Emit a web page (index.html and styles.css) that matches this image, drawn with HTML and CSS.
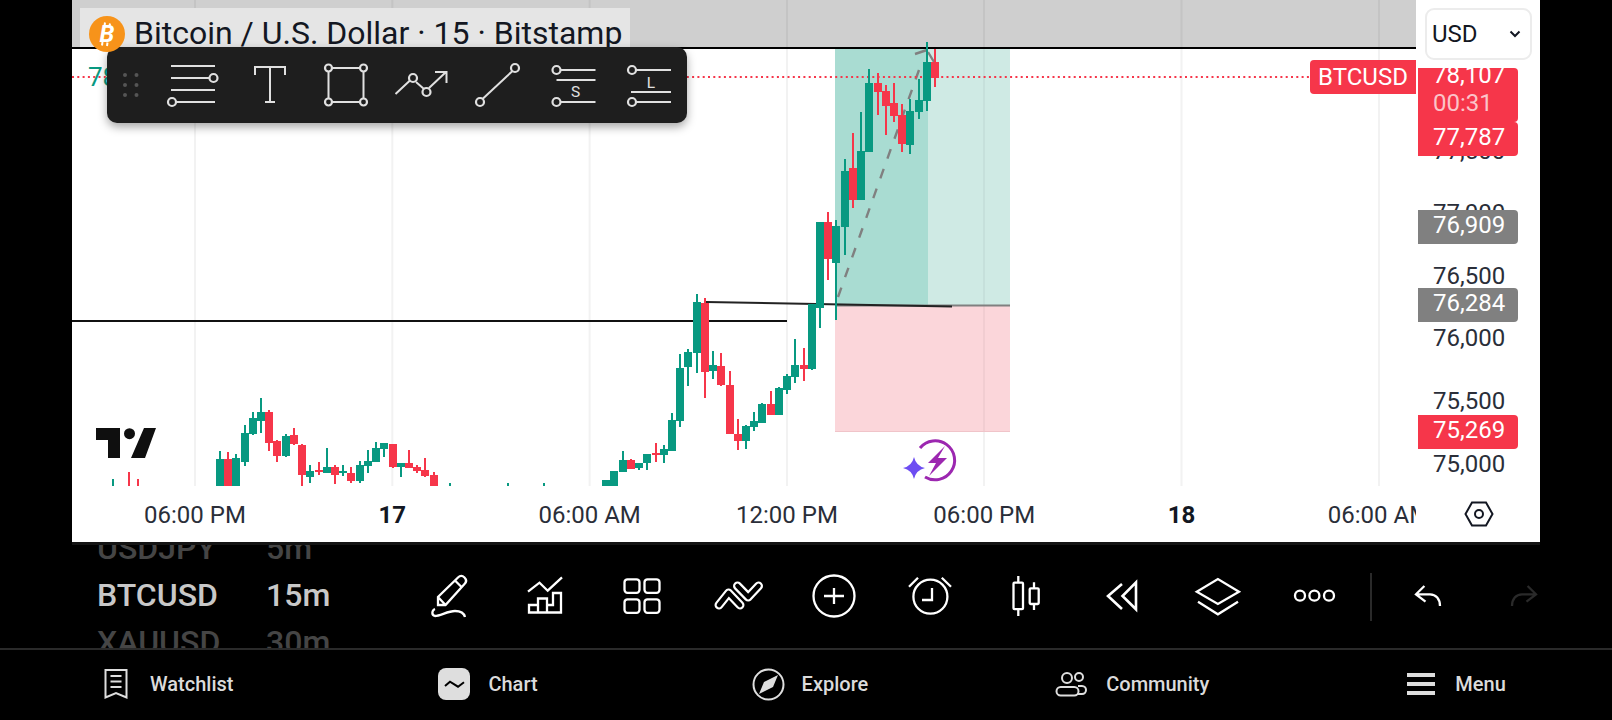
FILE: index.html
```html
<!DOCTYPE html>
<html lang="en">
<head>
<meta charset="utf-8">
<title>BTCUSD chart</title>
<link rel="stylesheet" href="styles.css">
</head>
<body>
<div class="app">
  <section class="frame">
    <div class="main">
      <div class="plot">
        <svg class="canvas" width="1344" height="486" viewBox="72 0 1344 486">
          <g class="grid">
            <path d="M195 0V486M392.3 0V486M589.6 0V486M787 0V486M984 0V486M1181.5 0V486M1379 0V486"/>
          </g>
          <rect x="835" y="48" width="93" height="257" fill="#a9dcd2"/>
          <rect x="928" y="48" width="82" height="257" fill="#cfeae4"/>
          <rect x="835" y="306" width="175" height="126" fill="#fbd6da"/>
          <path d="M984 48V432" stroke="#000" stroke-opacity=".04" stroke-width="2"/>
          <path d="M835 305.5H1010" stroke="#808080" stroke-width="2"/>
          <path d="M835 431.5H1010" stroke="#f0c4c9" stroke-width="1"/>
          <rect x="72" y="0" width="1344" height="47" fill="#000" fill-opacity=".19"/>
          <rect x="72" y="47" width="1344" height="2" fill="#000"/>
          <path d="M72 321H787" stroke="#111" stroke-width="2"/>
          <path d="M706 302L952 306.5" stroke="#222" stroke-width="2"/>
          <path d="M838 297L919 70" stroke="#808080" stroke-width="2.4" stroke-dasharray="10 11" fill="none"/>
          <path d="M915 54L927 50M928 52L934 62" stroke="#808080" stroke-width="2.4" fill="none"/>
          <path d="M72 77H1310" stroke="#f6364a" stroke-width="2" stroke-dasharray="2 3.3"/>
          <path class="up" d="M112 479h2V486h-2zM216 459h8V486h-8zM219 451h2V486h-2zM232 458h8V486h-8zM235 454h2V486h-2zM241 433h8V462h-8zM244 425h2V466h-2zM249 418h8V434h-8zM252 412h2V435h-2zM257 412h8V421h-8zM260 398h2V433h-2zM282 436h8V456h-8zM285 434h2V457h-2zM306 471h8V477h-8zM309 465h2V483h-2zM323 467h8V473h-8zM326 448h2V473h-2zM339 471h8V473h-8zM342 465h2V476h-2zM356 465h8V481h-8zM359 461h2V483h-2zM364 461h8V466h-8zM367 450h2V473h-2zM372 448h8V462h-8zM375 442h2V462h-2zM380 443h8V449h-8zM383 443h2V457h-2zM397 463h8V467h-8zM400 463h2V477h-2zM449 483h2V486h-2zM507 483h2V486h-2zM543 483h2V486h-2zM602 480h8V486h-8zM610 471h8V486h-8zM619 460h8V472h-8zM622 451h2V472h-2zM635 463h8V468h-8zM638 463h2V470h-2zM643 454h8V463h-8zM646 454h2V470h-2zM660 449h8V455h-8zM663 445h2V463h-2zM668 420h8V451h-8zM671 413h2V451h-2zM676 368h8V421h-8zM679 354h2V427h-2zM684 352h8V367h-8zM687 349h2V386h-2zM693 302h8V353h-8zM696 294h2V373h-2zM709 365h8V371h-8zM712 351h2V379h-2zM742 426h8V441h-8zM745 425h2V449h-2zM750 421h8V427h-8zM753 412h2V431h-2zM758 404h8V423h-8zM761 403h2V423h-2zM775 388h8V415h-8zM778 387h2V415h-2zM783 376h8V390h-8zM786 374h2V394h-2zM791 365h8V377h-8zM794 339h2V383h-2zM808 304h8V369h-8zM811 304h2V370h-2zM816 222h8V308h-8zM819 222h2V328h-2zM832 226h8V263h-8zM835 220h2V320h-2zM841 171h8V227h-8zM844 159h2V255h-2zM857 151h8V200h-8zM860 112h2V200h-2zM865 83h8V152h-8zM868 69h2V152h-2zM906 111h8V145h-8zM909 99h2V154h-2zM915 100h8V112h-8zM918 79h2V119h-2zM923 62h8V101h-8zM926 42h2V111h-2z"/>
          <path class="down" d="M128 472h2V486h-2zM137 479h2V486h-2zM224 459h8V486h-8zM227 452h2V486h-2zM265 412h8V443h-8zM268 410h2V451h-2zM273 441h8V456h-8zM276 440h2V462h-2zM290 435h8V444h-8zM293 428h2V445h-2zM298 445h8V475h-8zM301 444h2V486h-2zM315 470h8V472h-8zM318 462h2V475h-2zM331 467h8V475h-8zM334 465h2V484h-2zM347 473h8V481h-8zM350 467h2V483h-2zM389 444h8V467h-8zM392 444h2V468h-2zM405 463h8V468h-8zM408 450h2V468h-2zM413 467h8V471h-8zM416 465h2V473h-2zM421 470h8V476h-8zM424 458h2V477h-2zM430 475h8V486h-8zM433 472h2V486h-2zM627 460h8V469h-8zM630 459h2V469h-2zM652 453h8V455h-8zM655 443h2V462h-2zM701 303h8V372h-8zM704 298h2V398h-2zM717 366h8V385h-8zM720 353h2V386h-2zM726 385h8V434h-8zM729 371h2V434h-2zM734 434h8V441h-8zM737 419h2V450h-2zM767 404h8V415h-8zM770 391h2V415h-2zM800 365h8V369h-8zM803 348h2V381h-2zM824 222h8V259h-8zM827 212h2V280h-2zM849 168h8V200h-8zM852 133h2V208h-2zM874 83h8V92h-8zM877 73h2V115h-2zM882 91h8V106h-8zM885 85h2V135h-2zM890 103h8V116h-8zM893 83h2V122h-2zM898 115h8V144h-8zM901 104h2V152h-2zM931 62h8V78h-8zM934 49h2V87h-2z"/>
          <path class="logo" d="M96 428H120V458H108V440H96zM144 428H156L145 458H131z"/>
          <circle class="logo" cx="129.5" cy="433.7" r="5.5"/>
          <path d="M920 448A19.500 19.500 0 1 1 925 477" fill="none" stroke="#9c27b0" stroke-width="3"/>
          <path d="M945 446L928 463H936L929 476L947 458H938z" fill="#9c27b0"/>
          <path d="M914 457Q916 466 925 468Q916 470 914 479Q912 470 903 468Q912 466 914 457z" fill="#6d4df2"/>
        </svg>

        <div class="title">
          <svg class="coin" width="36" height="36" viewBox="0 0 36 36">
            <circle cx="18" cy="18" r="18" fill="#f7931a"/>
            <path d="M16 6.500L15.500 10M21 7.500L20.500 10M13.500 26L13 29.500M18.500 26.500L18 30" stroke="#fff" stroke-width="2"/>
            <text x="18" y="26" class="coin-b">B</text>
          </svg>
          <span>Bitcoin / U.S. Dollar · 15 · Bitstamp</span>
        </div>
        <div class="last-price">78,107</div>
        <div class="symbol-tag">BTCUSD</div>

        <div class="drawbar">
          <svg class="grip" width="48" height="76" viewBox="0 0 48 76">
            <g fill="#555"><circle cx="18" cy="28" r="2"/><circle cx="29.500" cy="28" r="2"/><circle cx="18" cy="38" r="2"/><circle cx="29.500" cy="38" r="2"/><circle cx="18" cy="48" r="2"/><circle cx="29.500" cy="48" r="2"/></g>
          </svg>
          <svg class="dt" viewBox="0 0 76.500 76"><path d="M16 19H60M16 31H54M16 43H60M21 55H60"/><circle cx="58.500" cy="31" r="4"/><circle cx="17" cy="55" r="4"/></svg>
          <svg class="dt" viewBox="0 0 76.500 76"><path d="M23 28V20H53V28M38 20V55M33 55H43"/></svg>
          <svg class="dt" viewBox="0 0 76.500 76"><path d="M21 21H56M21 55H56M20.500 25V51M55.500 25V51"/><circle cx="20.500" cy="21" r="3.500"/><circle cx="55.500" cy="21" r="3.500"/><circle cx="20.500" cy="55" r="3.500"/><circle cx="55.500" cy="55" r="3.500"/></svg>
          <svg class="dt" viewBox="2 0 76.500 76"><path d="M12.500 47L27.500 33M33 35L41 42M46 41L63 25M52 25H63.500V36"/><circle cx="30" cy="31" r="4"/><circle cx="43.500" cy="45" r="4"/></svg>
          <svg class="dt" viewBox="1.500 0 76.500 76"><path d="M23 52L53 24"/><circle cx="20.500" cy="55" r="4"/><circle cx="55.500" cy="21" r="4"/></svg>
          <svg class="dt" viewBox="0.500 0 76.500 76"><path d="M23 23H58M19 33H58M23 55H58"/><circle cx="19" cy="23" r="4"/><circle cx="19" cy="55" r="4"/><text x="38" y="50" class="dt-t">S</text></svg>
          <svg class="dt" viewBox="1 0 76.500 76"><path d="M23 23H58M18 45H58M23 55H58"/><circle cx="19" cy="23" r="4"/><circle cx="19" cy="55" r="4"/><text x="38" y="40.500" class="dt-t">L</text></svg>
        </div>
      </div>
      <div class="timeaxis">
        <span>06:00 PM</span><span class="day">17</span><span>06:00 AM</span><span>12:00 PM</span><span>06:00 PM</span><span class="day">18</span><span>06:00 AM</span>
      </div>
    </div>

    <aside class="side">
      <div class="usd"><span>USD</span>
        <svg width="12" height="8" viewBox="0 0 12 8"><path d="M1.500 1.500L6 6L10.500 1.500" fill="none" stroke="#131722" stroke-width="2"/></svg>
      </div>
      <span class="tick t-775">77,500</span>
      <span class="tick t-770">77,000</span>
      <span class="tick t-765">76,500</span>
      <span class="tick t-760">76,000</span>
      <span class="tick t-755">75,500</span>
      <span class="tick t-750">75,000</span>
      <div class="plabel red now"><span class="clip-top">78,107</span><span class="cd">00:31</span></div>
      <div class="plabel red l-787">77,787</div>
      <div class="plabel grey l-909">76,909</div>
      <div class="plabel grey l-284">76,284</div>
      <div class="plabel red l-269">75,269</div>
      <div class="axis-gear">
        <svg width="30" height="26" viewBox="0 0 30 26"><path d="M8 1.500H22L28.500 13L22 24.500H8L1.500 13z" fill="none" stroke="#131722" stroke-width="2"/><circle cx="15" cy="13" r="4" fill="none" stroke="#131722" stroke-width="2"/></svg>
      </div>
    </aside>
  </section>

  <section class="tools">
    <div class="watch">
      <div class="wrow dim"><b>USDJPY</b><span>5m</span></div>
      <div class="wrow"><b>BTCUSD</b><span>15m</span></div>
      <div class="wrow dim"><b>XAUUSD</b><span>30m</span></div>
    </div>
    <svg class="tb" viewBox="0 0 96 64"><path d="M36 41V33L56 13.500C58 11.500 60.500 11.500 62.500 13.500S64.500 18 62.500 20L43.500 41zM36 33L43.500 41M53 16.500L59.500 23"/><path d="M33 45C30 46 29 51 33 52C38 52 46 47 53 47C58 47 62 49 63 53"/></svg>
    <svg class="tb" viewBox="0 0 96 64"><path d="M30 27.700L41.500 18.700L49.700 26.700L64 13.300"/><path d="M31 41H40V34.500H49V41H55V29H63V48.500H31zM40 41V48.500M49 41V48.500"/></svg>
    <svg class="tb" viewBox="0 0 96 64"><rect x="30.500" y="15.300" width="15" height="13.500" rx="3"/><rect x="50.500" y="15.300" width="15" height="13.500" rx="3"/><rect x="30.500" y="35.300" width="15" height="13.500" rx="3"/><rect x="50.500" y="35.300" width="15" height="13.500" rx="3"/></svg>
    <svg class="tb" viewBox="0 0 96 64"><path class="fat" d="M29 41L38.600 29L50 41"/><path class="thin" d="M29 41L38.600 29L50 41"/><path class="fat" d="M47.500 22L58.200 33L68.500 22"/><path class="thin" d="M47.500 22L58.200 33L68.500 22"/></svg>
    <svg class="tb" viewBox="0 0 96 64"><circle cx="48" cy="32" r="20.500"/><path d="M38 32H58M48 24V40"/></svg>
    <svg class="tb" viewBox="0 0 96 64"><circle cx="48.400" cy="32.700" r="17"/><path d="M50 24V36H40M27 22.700L36 13.700M59.800 13.700L69 22.700"/></svg>
    <svg class="tb" viewBox="0 0 96 64"><rect x="35.500" y="18.700" width="9.500" height="26.500" rx="1"/><path d="M40.300 12V18.700M40.300 45.300V52M56 18.300V24.300M56 40V46"/><rect x="51.700" y="24.300" width="9" height="15.700" rx="1"/></svg>
    <svg class="tb strong" viewBox="0 0 96 64"><path d="M48 20L34 32L48 45"/><path d="M62 18.300V45.300L48.500 32z"/></svg>
    <svg class="tb" viewBox="0 0 96 64"><path d="M26.800 27.700L47.900 15L69 27.700L47.900 40z"/><path d="M28 37.700L47.900 50.300L68 37.700"/></svg>
    <svg class="tb" viewBox="0 0 96 64"><circle cx="34" cy="31.700" r="5"/><circle cx="48.400" cy="31.700" r="5"/><circle cx="63" cy="31.700" r="5"/></svg>
    <i class="vr"></i>
    <svg class="tb" viewBox="0 0 96 64"><path d="M44.400 22L36 30.300L45.500 37.700M36 30.300H50C56 30.300 60 35 60 42"/></svg>
    <svg class="tb off" viewBox="0 0 96 64"><path d="M51.600 22L60 30.300L50.500 37.700M60 30.300H46C40 30.300 36 35 36 42"/></svg>
  </section>

  <nav class="nav">
    <a class="item">
      <svg width="24" height="30" viewBox="0 0 24 30"><path class="ns" d="M1.500 1H22.500V28.500L12 24L1.500 28.500zM6.500 7H17.500M6.500 12.500H17.500M6.500 18H17.500"/></svg>
      <span>Watchlist</span>
    </a>
    <a class="item i-chart">
      <span class="chip"><svg width="32" height="32" viewBox="0 0 32 32"><path d="M7 18L12 13.700L20 18.700L26 14.300" fill="none" stroke="#000" stroke-width="2"/></svg></span>
      <span>Chart</span>
    </a>
    <a class="item i-explore">
      <svg width="33" height="33" viewBox="0 0 33 33"><circle class="ns" cx="16.500" cy="16.500" r="15"/><path d="M26 7L12 14L7 26L21 19z" fill="#dedede"/></svg>
      <span>Explore</span>
    </a>
    <a class="item i-community">
      <svg width="32" height="26" viewBox="0 0 32 26"><circle class="ns" cx="12" cy="7" r="5"/><circle class="ns" cx="24" cy="6" r="4"/><rect class="ns" x="1.500" y="16" width="22" height="8.500" rx="4.200"/><path class="ns" d="M23 15H27C29.500 15 31 17 31 19S29.500 23 27 23H22"/></svg>
      <span>Community</span>
    </a>
    <a class="item i-menu">
      <svg width="28" height="24" viewBox="0 0 28 24"><path d="M0 1H28V5H0zM0 10H28V14H0zM0 19H28V23H0z" fill="#dedede"/></svg>
      <span>Menu</span>
    </a>
  </nav>
</div>
</body>
</html>
```
FILE: styles.css
```css
* { box-sizing: border-box; }
html, body { margin: 0; padding: 0; width: 1612px; height: 720px; overflow: hidden; background: #000; }
body { font-family: Roboto, "Liberation Sans", sans-serif; }
.app { width: 1612px; height: 720px; overflow: hidden; display: flex; flex-direction: column; background: #000; }

.frame { display: flex; margin-left: 72px; width: 1468px; height: 545px; flex: none; background: #fff; border-bottom: 3px solid #141414; }
.main { width: 1344px; flex: none; display: flex; flex-direction: column; }
.plot { position: relative; height: 486px; flex: none; }
.canvas { display: block; overflow: visible; }
.grid path { stroke: #f2f2f2; stroke-width: 2; fill: none; }
.up { fill: #089981; }
.down { fill: #f6364a; }
.logo { fill: #0f0f0f; }

.title { position: absolute; left: 8px; top: 8px; width: 550px; height: 39px; display: flex; align-items: center; background: #e5e5e5; color: #131722; font-size: 32px; white-space: nowrap; line-height: 39px; }
.title span { margin-left: 9px; position: relative; top: 6px; }
.coin { flex: none; margin-left: 9px; position: relative; top: 6px; z-index: 1; }
.coin-b { font: italic 700 24px Roboto, sans-serif; fill: #fff; text-anchor: middle; }

.last-price { position: absolute; left: 16px; top: 62px; font-size: 26px; line-height: 30px; color: #089981; }
.symbol-tag { position: absolute; right: 0; top: 60px; width: 106px; height: 34px; border-radius: 4px 0 0 4px; background: #f6364a; color: #fff; font-size: 24px; line-height: 34px; text-align: center; }

.drawbar { position: absolute; left: 35px; top: 47px; width: 580px; height: 76px; display: flex; background: #1e1e1e; border-radius: 10px; box-shadow: 0 4px 10px rgba(0,0,0,.35); }
.grip { flex: none; }
.dt { flex: none; width: 76.5px; height: 76px; fill: none; stroke: #e0e0e0; stroke-width: 2; }
.dt circle { stroke-width: 2.2; fill: #1e1e1e; }
.dt-t { font: 400 15.5px Roboto, sans-serif; fill: #e0e0e0; stroke: none; text-anchor: middle; }

.timeaxis { height: 56px; flex: none; overflow: hidden; display: grid; grid-template-columns: repeat(7, 197.33px); padding-left: 24.3px; font-size: 24px; line-height: 58px; color: #2a2e39; text-align: center; white-space: nowrap; }
.day { font-weight: 700; color: #131722; }

.side { position: relative; width: 124px; flex: none; display: flex; flex-direction: column; }
.usd { margin: 8px 8px 0 9px; height: 52px; flex: none; border: 2px solid #ececec; border-radius: 9px; display: flex; align-items: center; justify-content: space-between; padding: 0 9px 0 5px; font-size: 24px; color: #131722; background: #fff; }
.tick { position: absolute; left: 2px; width: 100px; padding-left: 15px; font-size: 24px; line-height: 28px; color: #2a2e39; }
.t-775 { top: 137px; } .t-770 { top: 199px; } .t-765 { top: 262px; } .t-760 { top: 324px; } .t-755 { top: 387px; } .t-750 { top: 450px; }
.plabel { position: absolute; left: 2px; width: 100px; height: 34px; border-radius: 0 4px 4px 0; color: #fff; font-size: 24px; line-height: 28px; padding: 1px 0 0 15px; overflow: hidden; }
.red { background: #f6364a; }
.grey { background: #808080; }
.now { top: 68px; height: 54px; padding-top: 0; }
.clip-top, .cd { display: block; }
.clip-top { margin-top: -7px; }
.cd { color: #fbc4c9; }
.l-787 { top: 122px; } .l-909 { top: 210px; } .l-284 { top: 288px; } .l-269 { top: 415px; }
.axis-gear { margin-top: auto; height: 56px; flex: none; display: flex; align-items: center; justify-content: center; }
.axis-gear svg { margin-left: 2px; }

.tools { height: 103px; flex: none; display: flex; align-items: center; }
.watch { width: 402px; height: 103px; flex: none; overflow: hidden; display: flex; flex-direction: column; justify-content: center; padding: 0 0 2px 97px; }
.wrow { height: 47px; flex: none; display: flex; font-size: 32px; line-height: 47px; color: #c8c8c8; }
.wrow b { width: 169px; font-weight: 500; }
.wrow span { font-weight: 500; }
.dim { color: #454545; }
.tb { width: 96px; height: 64px; flex: none; fill: none; stroke: #fff; stroke-width: 2.3; margin-top: -1px; }
.tb.strong { stroke-width: 2.6; }
.tb.off { stroke: #2a2a2a; }
.tb .fat { stroke-width: 9; stroke-linecap: round; stroke-linejoin: round; }
.tb .thin { stroke: #000; stroke-width: 4.6; stroke-linecap: round; stroke-linejoin: round; }
.vr { width: 2px; height: 48px; margin: 0 8px 0 8px; background: #2a2a2a; flex: none; }

.nav { flex: none; height: 72px; border-top: 2px solid #2a2a2a; padding: 0 0 2px 104px; display: flex; align-items: center; color: #dbdbdb; font-size: 20px; font-weight: 500; }
.item { display: flex; align-items: center; gap: 22px; flex: none; }
.ns { fill: none; stroke: #dedede; stroke-width: 2; }
.chip { width: 32px; height: 32px; border-radius: 8px; background: #dedede; display: block; }
.chip svg { display: block; }
.i-chart { margin-left: 205px; gap: 18px; }
.i-explore { margin-left: 214px; gap: 17px; }
.i-community { margin-left: 187px; gap: 19px; }
.i-menu { margin-left: 198px; gap: 20px; }
```
